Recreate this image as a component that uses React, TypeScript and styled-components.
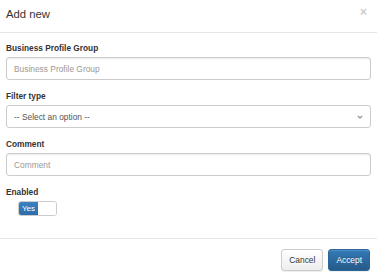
import React, { useState } from 'react'
import styled, { createGlobalStyle } from 'styled-components'

const GlobalStyle = createGlobalStyle`
    html, body {
        margin: 0;
        padding: 0;
        background: #fff;
    }
    body {
        font-family: "Liberation Sans", Arial, sans-serif;
        color: #333;
    }
    * {
        box-sizing: border-box;
    }
`

const Modal = styled.div`
    width: 377px;
    background: #fff;
`
const Header = styled.div`
    display: flex;
    justify-content: space-between;
    align-items: flex-start;
    padding: 7px 10px 10px 6px;
    border-bottom: 1px solid #e5e5e5;
`
const Title = styled.h4`
    margin: 0;
    font-size: 11.3px;
    font-weight: normal;
    line-height: 15px;
    color: #333;
`
const Close = styled.button`
    border: 0;
    background: none;
    padding: 0;
    margin-top: -1px;
    font-family: inherit;
    font-size: 12px;
    font-weight: bold;
    line-height: 12px;
    color: #000;
    opacity: 0.2;
    cursor: pointer;
`
const Body = styled.div`
    padding: 9px 6px 12px 6px;
`
const Group = styled.div`
    margin-bottom: 10px;
`
const Label = styled.label`
    display: block;
    font-size: 8.3px;
    font-weight: bold;
    line-height: 12px;
    margin-bottom: 3px;
    color: #333;
`
const Input = styled.input`
    display: block;
    width: 100%;
    height: 23px;
    padding: 0 7px;
    font-family: inherit;
    font-size: 8.4px;
    color: #555;
    border: 1px solid #ccc;
    border-radius: 3px;
    box-shadow: inset 0 1px 1px rgba(0, 0, 0, 0.075);
    outline: none;
    &::placeholder {
        color: #999;
    }
`
const SelectWrap = styled.div`
    position: relative;
`
const Select = styled.select`
    display: block;
    width: 100%;
    height: 23px;
    padding: 0 7px;
    font-family: inherit;
    font-size: 8.4px;
    color: #555;
    background: #fff;
    border: 1px solid #ccc;
    border-radius: 3px;
    appearance: none;
    outline: none;
`
const Chevron = styled.svg`
    position: absolute;
    right: 8px;
    top: 10px;
    pointer-events: none;
`
const Toggle = styled.div`
    display: flex;
    width: 39px;
    height: 15px;
    margin-left: 12px;
    border: 1px solid #ccc;
    border-radius: 3px;
    overflow: hidden;
    cursor: pointer;
`
const ToggleOn = styled.span<{ $on: boolean }>`
    width: 19px;
    display: flex;
    align-items: center;
    justify-content: center;
    font-size: 8px;
    color: #fff;
    background: ${({ $on }) => ($on ? 'linear-gradient(#3a82c2, #2d6ca8)' : '#fff')};
`
const ToggleHandle = styled.span`
    flex: 1;
    background: #fff;
`
const Footer = styled.div`
    display: flex;
    justify-content: flex-end;
    gap: 5px;
    padding: 10px 7px 6px;
    border-top: 1px solid #e5e5e5;
`
const Button = styled.button<{ $primary?: boolean }>`
    height: 22px;
    padding: 0 7px;
    font-family: inherit;
    font-size: 8.4px;
    border-radius: 3px;
    cursor: pointer;
    color: ${({ $primary }) => ($primary ? '#fff' : '#333')};
    border: 1px solid ${({ $primary }) => ($primary ? '#2b669a' : '#ccc')};
    background: ${({ $primary }) =>
        $primary ? 'linear-gradient(#337ab7, #265a88)' : 'linear-gradient(#fff, #ededed)'};
    box-shadow: inset 0 1px 0 rgba(255, 255, 255, 0.15), 0 1px 1px rgba(0, 0, 0, 0.075);
    text-shadow: ${({ $primary }) => ($primary ? '0 -1px 0 rgba(0,0,0,.2)' : '0 1px 0 #fff')};
`

const App = () => {
    const [enabled, setEnabled] = useState(true)

    return (
        <Modal>
            <GlobalStyle />
            <Header>
                <Title>Add new</Title>
                <Close>×</Close>
            </Header>
            <Body>
                <Group>
                    <Label>Business Profile Group</Label>
                    <Input placeholder="Business Profile Group" />
                </Group>
                <Group>
                    <Label>Filter type</Label>
                    <SelectWrap>
                        <Select defaultValue="">
                            <option value="">-- Select an option --</option>
                        </Select>
                        <Chevron width="6" height="4" viewBox="0 0 6 4">
                            <path d="M0.7 0.8 L3 3 L5.3 0.8" fill="none" stroke="#888" strokeWidth="1.1" />
                        </Chevron>
                    </SelectWrap>
                </Group>
                <Group>
                    <Label>Comment</Label>
                    <Input placeholder="Comment" />
                </Group>
                <Group>
                    <Label>Enabled</Label>
                    <Toggle onClick={() => setEnabled(!enabled)}>
                        <ToggleOn $on={enabled}>{enabled ? 'Yes' : ''}</ToggleOn>
                        <ToggleHandle />
                    </Toggle>
                </Group>
            </Body>
            <Footer>
                <Button>Cancel</Button>
                <Button $primary>Accept</Button>
            </Footer>
        </Modal>
    )
}

export default App
